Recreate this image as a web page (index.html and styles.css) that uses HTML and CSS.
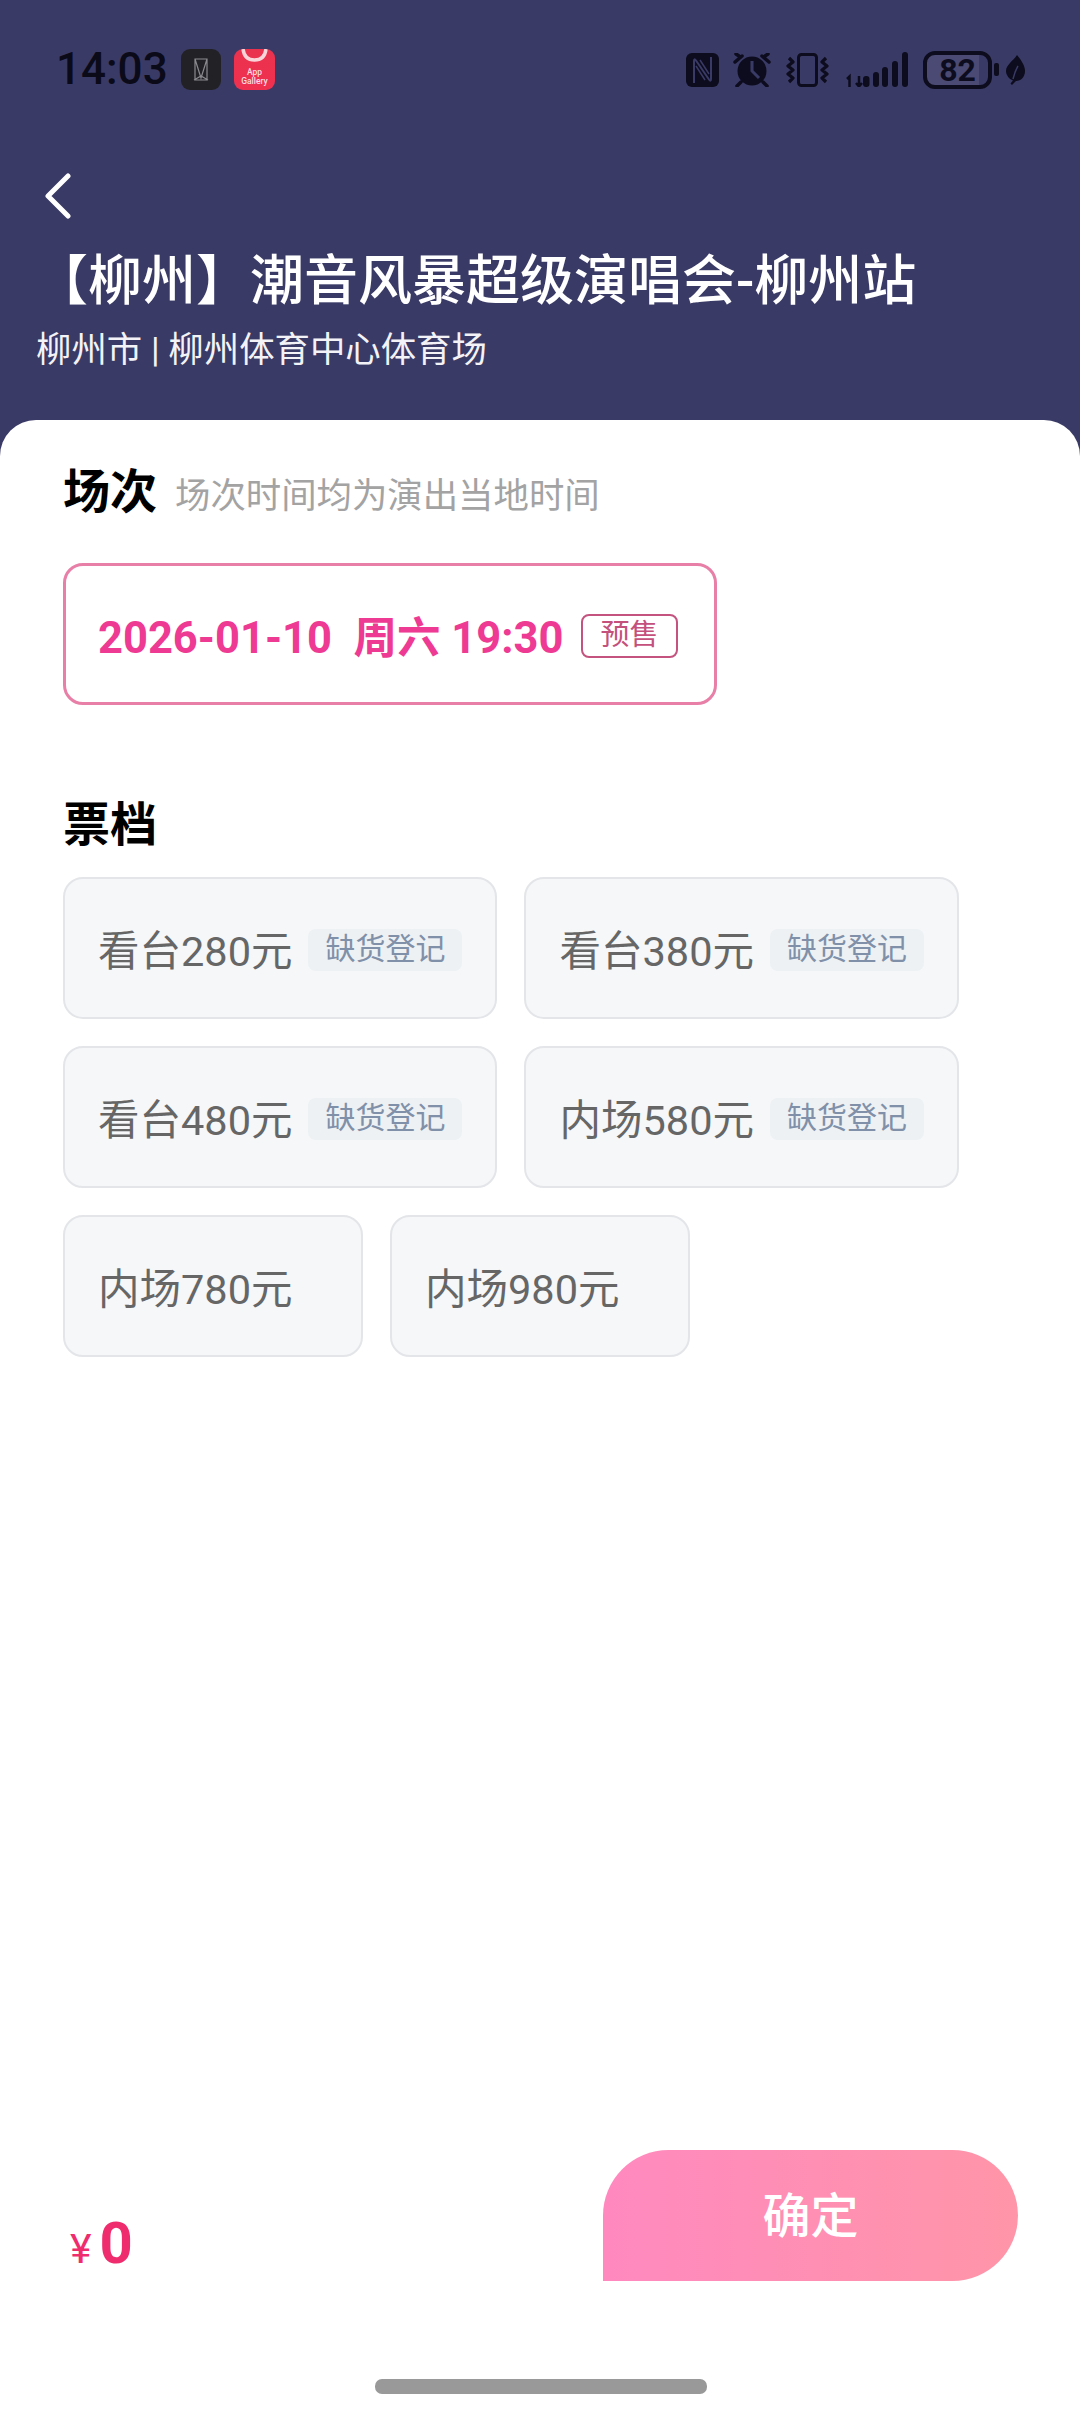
FILE: index.html
```html
<!DOCTYPE html>
<html lang="zh-CN">
<head>
    <meta charset="UTF-8">
    <meta name="viewport" content="width=device-width, initial-scale=1.0">
    <title>选择场次票档</title>
    <link rel="stylesheet" href="styles.css">
</head>
<body>

    <header class="top">
        <div class="status-bar">
            <span class="time">14:03</span>
            <svg class="app-icon first" viewBox="0 0 40 41">
                <rect width="40" height="41" rx="9" fill="#222226"/>
                <path d="M14 10h12v21H14zM14 10l6 19 6-19M13 31l7-4 7 4" fill="none" stroke="#8b8b8f" stroke-width="1.2"/>
            </svg>
            <svg class="app-icon" viewBox="0 0 41 41">
                <defs>
                    <linearGradient id="gallery" x1="0" y1="0" x2="0" y2="1">
                        <stop offset="0" stop-color="#e9324e"/>
                        <stop offset="1" stop-color="#f0304f"/>
                    </linearGradient>
                    <clipPath id="gallery-clip"><rect width="41" height="41" rx="9"/></clipPath>
                </defs>
                <g clip-path="url(#gallery-clip)">
                    <rect width="41" height="41" fill="url(#gallery)"/>
                    <path d="M9 0c1 8 6 11 11.500 11S31 8 32 0" fill="none" stroke="#f9d5da" stroke-width="3.500"/>
                </g>
                <text x="20.500" y="26" class="gallery-text">App</text>
                <text x="20.500" y="35" class="gallery-text">Gallery</text>
            </svg>

            <div class="status-icons">
                <svg class="nfc" viewBox="0 0 33 34">
                    <rect width="33" height="34" rx="6" fill="#0c0c1e"/>
                    <path d="M8 30V8q0-3 2-.5l13 19q2 2.500 2-.5V4" fill="none" stroke="#3a3a66" stroke-width="2"/>
                    <path d="M14 7l9 14M10 13l9 14" stroke="#3a3a66" stroke-width="1.500"/>
                </svg>
                <svg class="alarm" viewBox="0 0 38 34">
                    <circle cx="19" cy="18" r="14.500" fill="#0c0c1e"/>
                    <path d="M19 8v10l7 7" fill="none" stroke="#3a3a66" stroke-width="3"/>
                    <path d="M2 9l7-6M36 9l-7-6M3 1l3 2M35 1l-3 2M8 29l-4 4M30 29l4 4" stroke="#0c0c1e" stroke-width="3.500" stroke-linecap="round"/>
                </svg>
                <svg class="vibrate" viewBox="0 0 43 34">
                    <rect x="12.500" y="1.500" width="18" height="31" rx="3" fill="none" stroke="#0c0c1e" stroke-width="3"/>
                    <path d="M3 5l4 4-5 4 5 4-5 4 5 4-4 4M40 5l-4 4 5 4-5 4 5 4-5 4 4 4" fill="none" stroke="#0c0c1e" stroke-width="3.200" stroke-linejoin="round"/>
                </svg>
                <svg class="signal" viewBox="0 0 63 35">
                    <path d="M2 27l2.500-2.500V35M14 24v10M11 31l3 3.500 3-3.500" fill="none" stroke="#0c0c1e" stroke-width="2.500"/>
                    <rect x="18" y="24" width="6.500" height="11" rx="3" fill="#0c0c1e"/>
                    <rect x="28" y="20" width="6" height="15" rx="3" fill="#0c0c1e"/>
                    <rect x="37" y="15" width="6" height="20" rx="3" fill="#0c0c1e"/>
                    <rect x="47" y="9" width="6" height="26" rx="3" fill="#0c0c1e"/>
                    <rect x="57" y="0" width="6" height="35" rx="3" fill="#0c0c1e"/>
                </svg>
                <div class="battery">
                    <span class="battery-body">82</span>
                    <span class="battery-nub"></span>
                </div>
                <svg class="leaf" viewBox="0 0 19 30">
                    <path d="M11 0c5 6 8 11 8 16 0 6-4 10-9 10l-4 4-1.500-1.500L7 25.500C3 24 0 20 0 16 0 10 7 6 11 0z" fill="#0c0c1e"/>
                    <path d="M7 24q2-8 5-13" fill="none" stroke="#3a3a66" stroke-width="1.500"/>
                </svg>
            </div>
        </div>

        <svg class="back" viewBox="0 0 26 46">
            <path d="M23 3L3 23l20 20" fill="none" stroke="#fff" stroke-width="5" stroke-linecap="round" stroke-linejoin="round"/>
        </svg>
        <h1 class="title">【柳州】潮音风暴超级演唱会-柳州站</h1>
        <p class="venue">柳州市 | 柳州体育中心体育场</p>
    </header>

    <main class="sheet">
        <div class="section-head">
            <h2>场次</h2>
            <span class="hint">场次时间均为演出当地时间</span>
        </div>
        <div class="session">
            <span class="session-text">2026-01-10&nbsp; 周六 19:30</span>
            <span class="session-tag">预售</span>
        </div>

        <div class="section-head tickets-head">
            <h2>票档</h2>
        </div>
        <div class="tickets">
            <div class="ticket"><span>看台280元</span><span class="ticket-tag">缺货登记</span></div>
            <div class="ticket"><span>看台380元</span><span class="ticket-tag">缺货登记</span></div>
            <div class="ticket"><span>看台480元</span><span class="ticket-tag">缺货登记</span></div>
            <div class="ticket"><span>内场580元</span><span class="ticket-tag">缺货登记</span></div>
            <div class="ticket"><span>内场780元</span></div>
            <div class="ticket"><span>内场980元</span></div>
        </div>

        <footer class="bottom">
            <div class="price"><span class="currency">¥</span><span class="amount">0</span></div>
            <button class="confirm">确定</button>
        </footer>
        <div class="home-bar"></div>
    </main>

</body>
</html>
```

FILE: styles.css
```css
* {
    box-sizing: border-box;
}

body {
    margin: 0;
    width: 1080px;
    height: 2411px;
    display: flex;
    flex-direction: column;
    overflow: hidden;
    background-color: #3a3a66;
    font-family: Roboto, "Noto Sans CJK SC", sans-serif;
}

/* header */
.top {
    height: 420px;
    flex-shrink: 0;
    display: flex;
    flex-direction: column;
}

.status-bar {
    display: flex;
    align-items: center;
    height: 41px;
    margin-top: 49px;
    padding: 0 55px 0 56px;
}

.time {
    font-size: 44px;
    font-weight: 500;
    line-height: 41px;
    color: #0a0a18;
}

.app-icon {
    width: 41px;
    height: 41px;
    margin-left: 13px;
}

.app-icon.first {
    width: 40px;
    margin-left: 13px;
}

.gallery-text {
    font-size: 8.500px;
    font-weight: 500;
    fill: #fbdde1;
    text-anchor: middle;
}

.status-icons {
    margin-left: auto;
    display: flex;
    align-items: center;
}

.nfc {
    width: 33px;
    height: 34px;
}

.alarm {
    width: 38px;
    height: 34px;
    margin-left: 14px;
}

.vibrate {
    width: 43px;
    height: 34px;
    margin-left: 15px;
}

.signal {
    width: 63px;
    height: 35px;
    margin-left: 16px;
}

.battery {
    display: flex;
    align-items: center;
    gap: 2px;
    margin-left: 15px;
}

.battery-body {
    width: 69px;
    height: 38px;
    border: 4px solid #0c0c1e;
    border-radius: 12px;
    background: linear-gradient(90deg, #4a4a74 86%, #3a3a66 86%);
    color: #0c0c1e;
    font-size: 32px;
    font-weight: 700;
    line-height: 30px;
    text-align: center;
}

.battery-nub {
    width: 5px;
    height: 13px;
    border-radius: 2px;
    background-color: #0c0c1e;
}

.leaf {
    width: 19px;
    height: 30px;
    margin-left: 7px;
}

.back {
    width: 26px;
    height: 46px;
    margin: 83px 0 0 45px;
    flex-shrink: 0;
}

.title {
    margin: 32px 0 0 34px;
    color: #fff;
    font-size: 54px;
    font-weight: 500;
    line-height: 62px;
    white-space: nowrap;
}

.venue {
    margin: 14px 0 0 36px;
    color: #f3f3f7;
    font-size: 35.400px;
    line-height: 46px;
}

/* white sheet */
.sheet {
    flex: 1;
    display: flex;
    flex-direction: column;
    padding: 0 62px 17px 63px;
    background-color: #fff;
    border-radius: 36px 36px 0 0;
}

.section-head {
    display: flex;
    align-items: baseline;
    gap: 18px;
    padding-top: 42px;
}

.section-head h2 {
    margin: 0;
    color: #000;
    font-size: 47px;
    font-weight: 700;
    line-height: 60px;
}

.hint {
    color: #a3a3a3;
    font-size: 35.400px;
}

.session {
    display: flex;
    align-items: center;
    justify-content: space-between;
    width: 654px;
    height: 142px;
    margin-top: 41px;
    padding: 0 36px 0 32px;
    border: 3px solid #e87fa6;
    border-radius: 20px;
}

.session-text {
    color: #ee3a93;
    font-size: 43.500px;
    font-weight: 700;
    white-space: nowrap;
}

.session-tag {
    width: 97px;
    height: 44px;
    margin-top: 4px;
    border: 2px solid #c4547f;
    border-radius: 8px;
    color: #c4507c;
    font-size: 29px;
    line-height: 38px;
    text-align: center;
}

.tickets-head {
    padding-top: 90px;
}

.tickets {
    display: flex;
    flex-wrap: wrap;
    gap: 27px 27px;
    margin-top: 22px;
}

.ticket {
    display: flex;
    align-items: center;
    gap: 16px;
    min-width: 300px;
    height: 142px;
    padding: 0 33px 0 33px;
    border: 2px solid #e3e5e8;
    border-radius: 20px;
    background-color: #f5f7f9;
    color: #666;
    font-size: 41.500px;
}

.ticket-tag {
    width: 154px;
    height: 42px;
    margin-top: 4px;
    border-radius: 8px;
    background-color: #edf1f4;
    color: #8090a8;
    font-size: 30px;
    line-height: 40px;
    text-align: center;
}

/* total and confirm */
.bottom {
    display: flex;
    align-items: flex-end;
    justify-content: space-between;
    margin-top: auto;
    padding-left: 7px;
}

.price {
    display: flex;
    align-items: baseline;
    gap: 8px;
    margin-bottom: 6px;
    color: #ef2d6e;
}

.currency {
    font-size: 41px;
}

.amount {
    font-size: 58px;
    font-weight: 700;
    line-height: 64px;
}

.confirm {
    width: 415px;
    height: 131px;
    padding: 0 0 8px;
    border: none;
    border-radius: 66px 66px 66px 0;
    background: linear-gradient(90deg, #ff89bf, #ff95a8);
    color: #fff;
    font-family: inherit;
    font-size: 48px;
    font-weight: 500;
}

.home-bar {
    width: 332px;
    height: 15px;
    margin: 98px auto 0;
    border-radius: 7px;
    background-color: #999;
}
```
